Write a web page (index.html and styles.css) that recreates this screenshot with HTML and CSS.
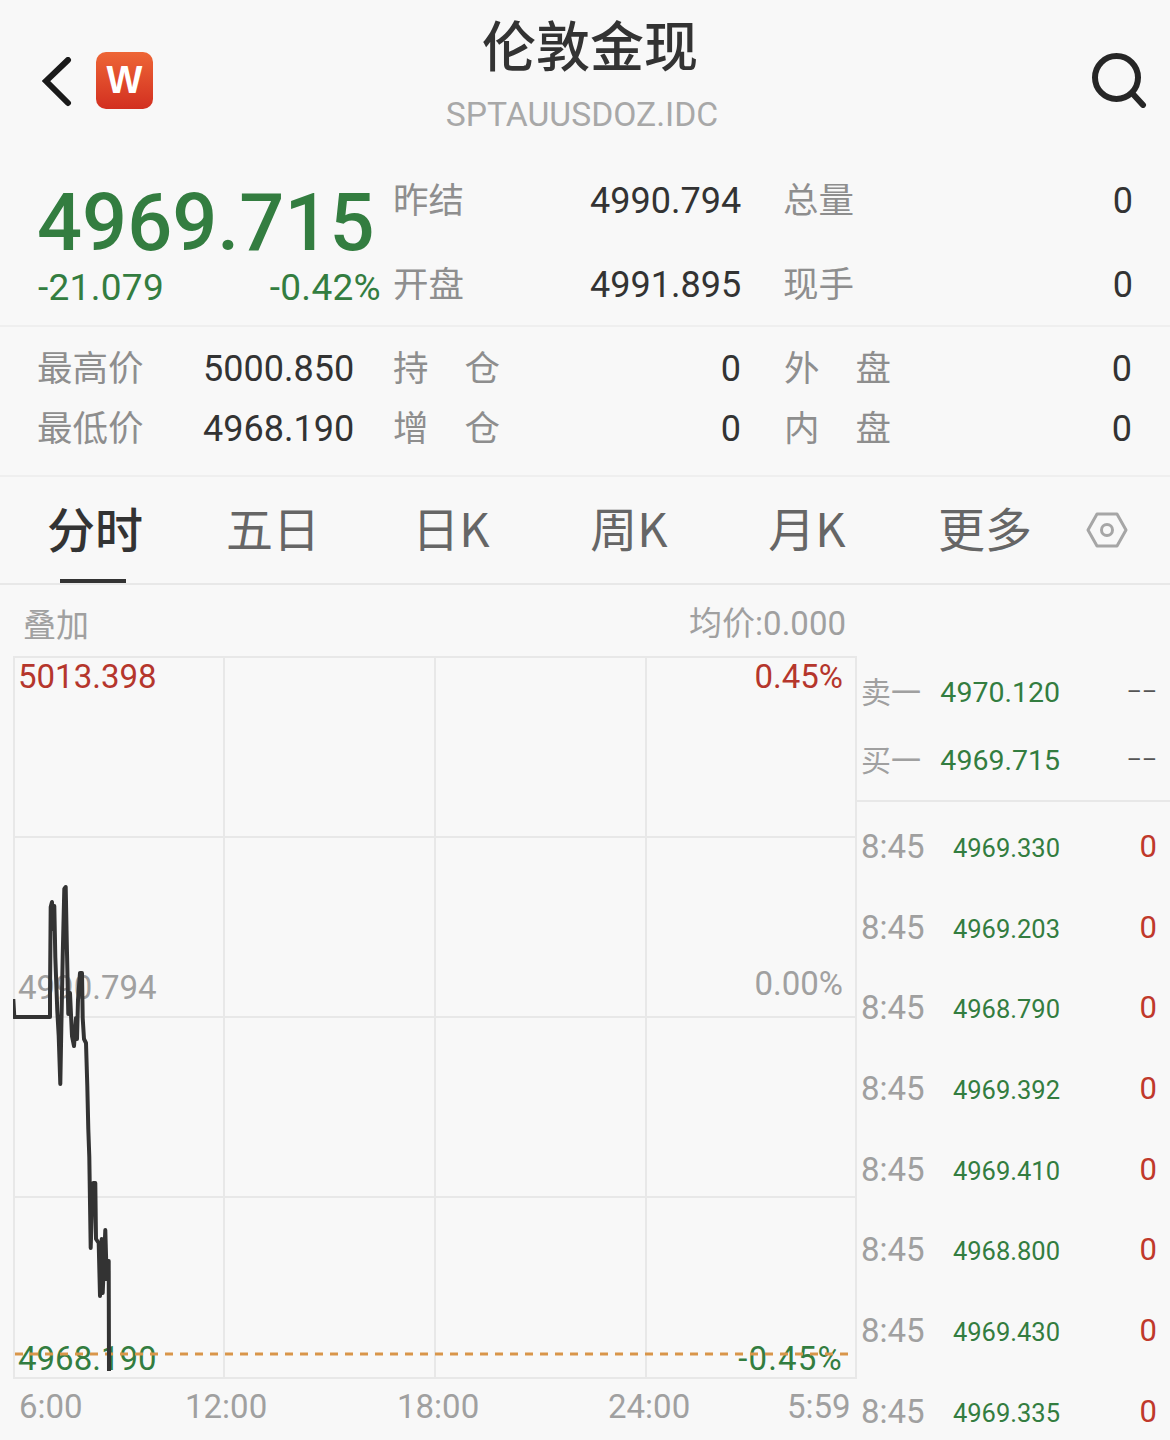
FILE: index.html
```html
<!DOCTYPE html>
<html lang="zh-CN">
<head>
    <meta charset="UTF-8">
    <meta name="viewport" content="width=device-width, initial-scale=1.0">
    <title>伦敦金现</title>
    <link rel="stylesheet" href="styles.css">
</head>
<body>
    <header class="topbar">
        <div class="topbar-left">
            <svg class="back-icon" viewBox="0 0 30 50" width="30" height="50">
                <path d="M26 3 L4 24 L26 46" fill="none" stroke="#1a1a1a" stroke-width="6" stroke-linecap="round" stroke-linejoin="miter"/>
            </svg>
            <div class="logo">W</div>
        </div>
        <div class="title-block">
            <h1>伦敦金现</h1>
            <div class="symbol">SPTAUUSDOZ.IDC</div>
        </div>
        <div class="topbar-right">
            <svg class="search-icon" viewBox="0 0 56 56" width="56" height="56">
                <circle cx="25.5" cy="25.5" r="21.5" fill="none" stroke="#262626" stroke-width="6"/>
                <path d="M41 41 L52 53" stroke="#262626" stroke-width="6" stroke-linecap="round"/>
            </svg>
        </div>
    </header>

    <section class="quote">
        <div class="price-box">
            <div class="price">4969.715</div>
            <div class="change">
                <span>-21.079</span>
                <span>-0.42%</span>
            </div>
        </div>
        <div class="quote-grid">
            <span class="label">昨结</span><span class="value">4990.794</span>
            <span class="label">总量</span><span class="value">0</span>
            <span class="label">开盘</span><span class="value">4991.895</span>
            <span class="label">现手</span><span class="value">0</span>
        </div>
    </section>

    <section class="stats">
        <span class="label">最高价</span><span class="value">5000.850</span>
        <span class="label wide">持仓</span><span class="value">0</span>
        <span class="label wide">外盘</span><span class="value">0</span>
        <span class="label">最低价</span><span class="value">4968.190</span>
        <span class="label wide">增仓</span><span class="value">0</span>
        <span class="label wide">内盘</span><span class="value">0</span>
    </section>

    <nav class="tabs">
        <a class="tab active">分时</a>
        <a class="tab">五日</a>
        <a class="tab">日K</a>
        <a class="tab">周K</a>
        <a class="tab">月K</a>
        <a class="tab">更多</a>
        <svg class="gear-icon" viewBox="0 0 42 38" width="42" height="38">
            <path d="M11 3 H31 L40 19 L31 35 H11 L2 19 Z" fill="none" stroke="#a6a6a6" stroke-width="3" stroke-linejoin="round"/>
            <circle cx="21" cy="19" r="5.5" fill="none" stroke="#a6a6a6" stroke-width="3"/>
        </svg>
    </nav>

    <main class="market">
        <div class="chart-col">
            <div class="legend">
                <span>叠加</span>
                <span class="avg">均价:0.000</span>
            </div>
            <div class="chart">
                <span class="axis red top-left">5013.398</span>
                <span class="axis red top-right">0.45%</span>
                <span class="axis gray mid-left">4990.794</span>
                <span class="axis gray mid-right">0.00%</span>
                <span class="axis green low-left">4968.190</span>
                <span class="axis green low-right">-0.45%</span>
                <svg class="chart-svg" viewBox="13 656 844 724" width="844" height="724">
                    <g stroke="#e8e8e8" stroke-width="2" fill="none">
                        <rect x="14" y="657" width="842" height="721"/>
                        <path d="M224 657V1378M435 657V1378M646 657V1378M14 837H856M14 1017H856M14 1197H856"/>
                    </g>
                    <path d="M15 1354H850" stroke="#d9964a" stroke-width="3" stroke-dasharray="8 7"/>
                    <polyline fill="none" stroke="#333" stroke-width="4" stroke-linejoin="round" points="13.3,999 14.3,1017 50,1017 50,993 50.7,907 52,902 52.7,929 54.3,906 55.3,957 57.3,1011 58.7,1036 60.3,1084 61.3,1029 62.7,957 64.3,889 65.7,887 66.7,939 68.3,1014 70,993 72,1036 74,1046 76,1018 77,1039 78,1000 80,973 82,973 82.7,1018 84,1039 86,1043 87.3,1086 88.3,1129 89.3,1157 90.7,1248 92,1207 93.3,1183 95.3,1183 96,1239 98.7,1243 100,1296 101.7,1239 102.7,1293 105.3,1230 106.7,1279 108.7,1261 109,1371"/>
                </svg>
            </div>
            <div class="times">
                <span>6:00</span>
                <span>12:00</span>
                <span>18:00</span>
                <span>24:00</span>
                <span>5:59</span>
            </div>
        </div>

        <aside class="side">
            <div class="book">
                <div class="book-row"><span class="book-label">卖一</span><span class="book-price">4970.120</span><span class="book-size">––</span></div>
                <div class="book-row"><span class="book-label">买一</span><span class="book-price">4969.715</span><span class="book-size">––</span></div>
            </div>
            <div class="trades">
                <div class="trade"><span class="trade-time">8:45</span><span class="trade-price">4969.330</span><span class="trade-size">0</span></div>
                <div class="trade"><span class="trade-time">8:45</span><span class="trade-price">4969.203</span><span class="trade-size">0</span></div>
                <div class="trade"><span class="trade-time">8:45</span><span class="trade-price">4968.790</span><span class="trade-size">0</span></div>
                <div class="trade"><span class="trade-time">8:45</span><span class="trade-price">4969.392</span><span class="trade-size">0</span></div>
                <div class="trade"><span class="trade-time">8:45</span><span class="trade-price">4969.410</span><span class="trade-size">0</span></div>
                <div class="trade"><span class="trade-time">8:45</span><span class="trade-price">4968.800</span><span class="trade-size">0</span></div>
                <div class="trade"><span class="trade-time">8:45</span><span class="trade-price">4969.430</span><span class="trade-size">0</span></div>
                <div class="trade"><span class="trade-time">8:45</span><span class="trade-price">4969.335</span><span class="trade-size">0</span></div>
            </div>
        </aside>
    </main>
</body>
</html>
```

FILE: styles.css
```css
* {
    margin: 0;
    padding: 0;
    box-sizing: border-box;
}

body {
    width: 1170px;
    height: 1440px;
    overflow: hidden;
    background-color: #f8f8f8;
    color: #333;
    font-family: Roboto, 'Noto Sans CJK SC', sans-serif;
}

/* Top bar */
.topbar {
    display: grid;
    grid-template-columns: 440px 300px 1fr;
    height: 150px;
}

.topbar-left {
    display: flex;
    align-items: flex-start;
    padding: 52px 0 0 42px;
}

.back-icon {
    margin: 5px 24px 0 0;
}

.logo {
    width: 57px;
    height: 57px;
    border-radius: 10px;
    background: linear-gradient(#ee6636, #d22f20);
    color: #fff;
    font-family: 'Liberation Sans', sans-serif;
    font-size: 38px;
    font-weight: 700;
    line-height: 57px;
    text-align: center;
}

.title-block {
    text-align: center;
}

.title-block h1 {
    margin-top: 11px;
    font-family: 'Noto Sans CJK SC', sans-serif;
    font-size: 54px;
    font-weight: 500;
    line-height: 66px;
    color: #333;
}

.symbol {
    margin: 18px 16px 0 0;
    font-size: 33.7px;
    line-height: 40px;
    color: #a8a8a8;
    white-space: nowrap;
}

.topbar-right {
    display: flex;
    justify-content: flex-end;
    padding: 52px 23px 0 0;
}

/* Quote */
.quote {
    display: flex;
    height: 177px;
    padding-left: 37px;
    border-bottom: 2px solid #efefef;
}

.price-box {
    width: 356px;
}

.price {
    margin-top: 28px;
    font-size: 79.3px;
    font-weight: 500;
    line-height: 90px;
    color: #337d40;
}

.change {
    display: flex;
    justify-content: space-between;
    width: 343px;
    margin: -2px 0 0 1px;
    font-size: 37px;
    letter-spacing: 0.3px;
    line-height: 44px;
    color: #337d40;
}

.quote-grid {
    display: grid;
    grid-template-columns: 197px 151px 70px 322px;
    grid-template-rows: 84px 84px;
    align-items: center;
    margin-top: 8px;
}

.quote-grid .label:nth-child(3),
.quote-grid .label:nth-child(7) {
    margin-left: 42px;
}

.label {
    margin-bottom: 6px;
    font-family: 'Noto Sans CJK SC', sans-serif;
    font-size: 35.5px;
    color: #8e8e8e;
    white-space: nowrap;
}

.value {
    margin-top: 2px;
    font-size: 36px;
    color: #333;
    text-align: right;
}

/* Stats */
.stats {
    display: grid;
    grid-template-columns: 166px 150px 150px 238px 150px 241px;
    grid-template-rows: 60px 60px;
    align-items: center;
    height: 150px;
    padding: 11px 0 0 37px;
    border-bottom: 2px solid #efefef;
}

.stats .label.wide {
    letter-spacing: 36px;
}

.stats .label.wide:nth-child(3),
.stats .label.wide:nth-child(9) {
    margin-left: 40px;
}

.stats .label.wide:nth-child(5),
.stats .label.wide:nth-child(11) {
    margin-left: 43px;
}

.stats .value:nth-child(2),
.stats .value:nth-child(8) {
    text-align: left;
}

/* Tabs */
.tabs {
    display: flex;
    align-items: center;
    height: 108px;
    padding-left: 6px;
    border-bottom: 2px solid #e8e8e8;
}

.tab {
    position: relative;
    width: 178px;
    height: 106px;
    font-family: 'Noto Sans CJK SC', sans-serif;
    font-size: 47px;
    line-height: 100px;
    text-align: center;
    color: #666;
}

.tab.active {
    font-weight: 500;
    font-size: 48px;
    color: #333;
}

.tab.active::after {
    content: '';
    position: absolute;
    left: 54px;
    bottom: 0;
    width: 66px;
    height: 4px;
    background-color: #333;
}

.gear-icon {
    margin-left: 12px;
}

/* Market area */
.market {
    display: flex;
}

.chart-col {
    width: 844px;
    margin-left: 13px;
}

.legend {
    display: flex;
    justify-content: space-between;
    height: 71px;
    padding: 17px 11px 0 10px;
    font-family: 'Noto Sans CJK SC', sans-serif;
    font-size: 33px;
    line-height: 42px;
    color: #a0a0a0;
}

.avg {
    margin-top: 1px;
    font-family: Roboto, 'Noto Sans CJK SC', sans-serif;
    font-size: 33px;
}

.chart {
    position: relative;
    height: 724px;
}

.chart-svg {
    display: block;
    position: relative;
    z-index: 1;
}

.axis {
    position: absolute;
    font-size: 33px;
    line-height: 40px;
}

.red { color: #b5362c; }
.gray { color: #a0a0a0; }
.green { color: #337d40; }

.top-left { left: 5px; top: 1px; }
.top-right { right: 14px; top: 1px; }
.mid-left { left: 5px; top: 312px; }
.mid-right { right: 14px; top: 308px; }
.low-left { left: 5px; top: 683px; }
.low-right { right: 14px; top: 683px; letter-spacing: 1.2px; }

.times {
    display: grid;
    grid-template-columns: 166px 212px 211px 179px auto;
    padding: 5px 0 0 6px;
    font-size: 33px;
    line-height: 44px;
    color: #a0a0a0;
}

/* Right panel */
.side {
    flex: 1;
    padding-top: 71px;
}

.book {
    height: 146px;
    padding: 2px 13px 0 4px;
    border-bottom: 2px solid #e8e8e8;
}

.book-row {
    display: grid;
    grid-template-columns: 61px 138px 97px;
    align-items: center;
    height: 68px;
}

.book-label {
    margin-bottom: 4px;
    font-family: 'Noto Sans CJK SC', sans-serif;
    font-size: 30px;
    color: #a0a0a0;
}

.book-price {
    font-size: 28.5px;
    text-align: right;
    color: #337d40;
}

.book-size {
    font-size: 23px;
    text-align: right;
    color: #555;
}

.trades {
    padding: 4px 13px 0 4px;
}

.trade {
    display: grid;
    grid-template-columns: 65px 134px 97px;
    align-items: center;
    height: 80.7px;
}

.trade-time {
    font-size: 33px;
    color: #a0a0a0;
}

.trade-price {
    margin-top: 3px;
    font-size: 25.5px;
    text-align: right;
    color: #337d40;
}

.trade-size {
    font-size: 31px;
    text-align: right;
    color: #c0392b;
}
```
